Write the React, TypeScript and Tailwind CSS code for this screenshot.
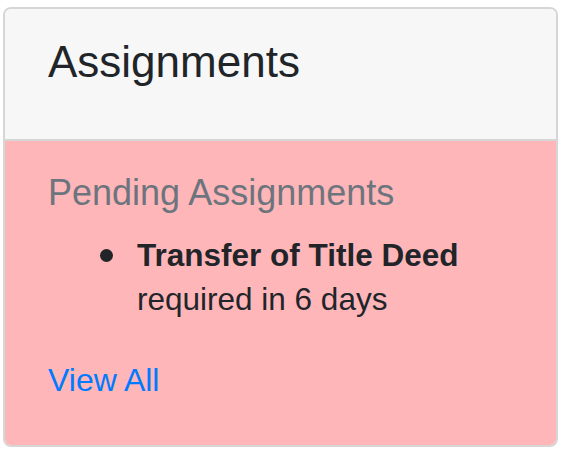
const App = () => {
  return (
    <div className="min-h-[454px] bg-white pt-[7px] pl-[3px]" style={{ fontFamily: '"Liberation Sans", Arial, sans-serif' }}>
      <div className="w-[555px] rounded-[8px] border-2 border-[#d6d6d6] overflow-hidden">
        <div className="h-[132px] bg-[#f7f7f7] border-b-2 border-[#d6d6d6] pl-[43px] pt-[31px]">
          <h4 className="text-[44px] leading-[44px] text-[#212529]">Assignments</h4>
        </div>
        <div className="bg-[#ffb6b9] pl-[43px] pt-[34px] pb-[43px]">
          <h5 className="text-[36px] leading-[36px] text-[#6c757d]">Pending Assignments</h5>
          <div className="mt-[22px] flex">
            <div className="w-[89px] flex justify-end pr-[24px] pt-[16px]">
              <span className="block w-[13px] h-[13px] rounded-full bg-[#212529]"></span>
            </div>
            <div className="text-[31.5px] leading-[44px] text-[#212529]">
              <div className="font-bold">Transfer of Title Deed</div>
              <div>required in 6 days</div>
            </div>
          </div>
          <a href="#" className="block mt-[37px] text-[32px] leading-[44px] text-[#007bff]">
            View All
          </a>
        </div>
      </div>
    </div>
  );
};

export default App;
